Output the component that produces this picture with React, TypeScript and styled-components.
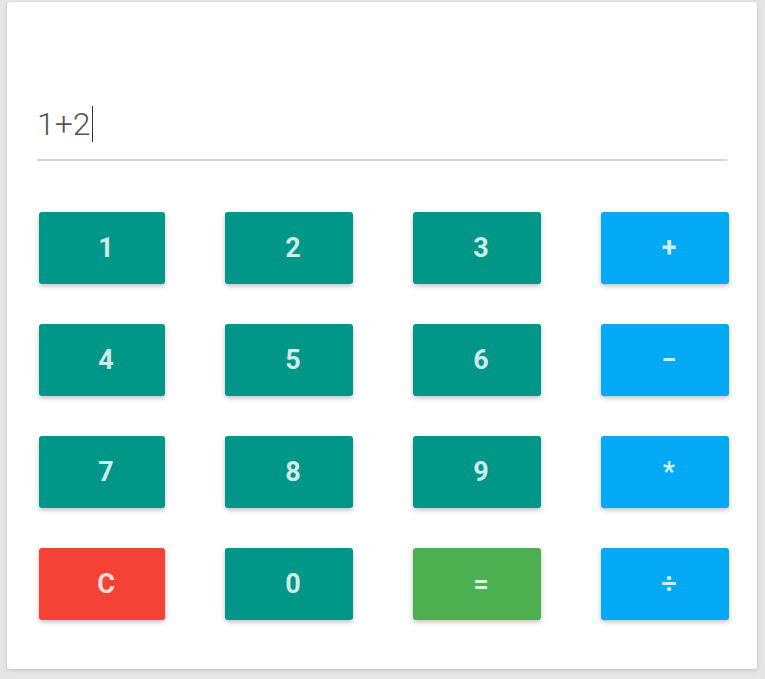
import React from "react";
import styled, { createGlobalStyle } from "styled-components";

const Global = createGlobalStyle`
  html, body { margin: 0; padding: 0; background: #e6e6e6; }
  body { font-family: Roboto, "Liberation Sans", Arial, sans-serif; }
`;

const Page = styled.div`
  width: 765px;
  height: 679px;
  box-sizing: border-box;
  padding: 2px 8px 0 7px;
`;

const Card = styled.div`
  width: 750px;
  height: 667px;
  box-sizing: border-box;
  background: #fff;
  border-radius: 3px;
  box-shadow: 0 1px 4px rgba(0, 0, 0, 0.18);
  padding: 102px 30px 0 30px;
  display: flex;
  flex-direction: column;
`;

const Display = styled.div`
  height: 40px;
  line-height: 40px;
  font-size: 32px;
  font-weight: 300;
  color: #555;
  padding-bottom: 15px;
  border-bottom: 2px solid #d2d2d2;
  width: 690px;
  display: flex;
  align-items: center;
`;

const Caret = styled.span`
  display: inline-block;
  width: 1.5px;
  height: 36px;
  background: #333;
  margin-left: 1px;
`;

const Keys = styled.div`
  margin-top: 51px;
  padding-left: 2px;
  display: grid;
  grid-template-columns: 126px 128px 128px 128px;
  column-gap: 60px;
  row-gap: 40px;
`;

const colors: Record<string, string> = {
  num: "#009688",
  op: "#03a9f4",
  clear: "#f44336",
  eq: "#4caf50",
};

const Key = styled.button<{ $kind: string }>`
  height: 72px;
  border: none;
  border-radius: 3px;
  background: ${(p) => colors[p.$kind]};
  color: rgba(255, 255, 255, 0.82);
  font-family: Roboto, "Liberation Sans", Arial, sans-serif;
  font-size: 27px;
  font-weight: 700;
  box-shadow: 0 2px 5px rgba(0, 0, 0, 0.26);
  display: flex;
  align-items: center;
  justify-content: center;
  padding: 0 0 0 8px;
  cursor: pointer;
`;

const keys: [string, string][] = [
  ["1", "num"], ["2", "num"], ["3", "num"], ["+", "op"],
  ["4", "num"], ["5", "num"], ["6", "num"], ["−", "op"],
  ["7", "num"], ["8", "num"], ["9", "num"], ["*", "op"],
  ["C", "clear"], ["0", "num"], ["=", "eq"], ["÷", "op"],
];

export default function App() {
  return (
    <>
      <Global />
      <Page>
        <Card>
          <Display>
            1+2
            <Caret />
          </Display>
          <Keys>
            {keys.map(([label, kind]) => (
              <Key key={label} $kind={kind}>
                {label}
              </Key>
            ))}
          </Keys>
        </Card>
      </Page>
    </>
  );
}
